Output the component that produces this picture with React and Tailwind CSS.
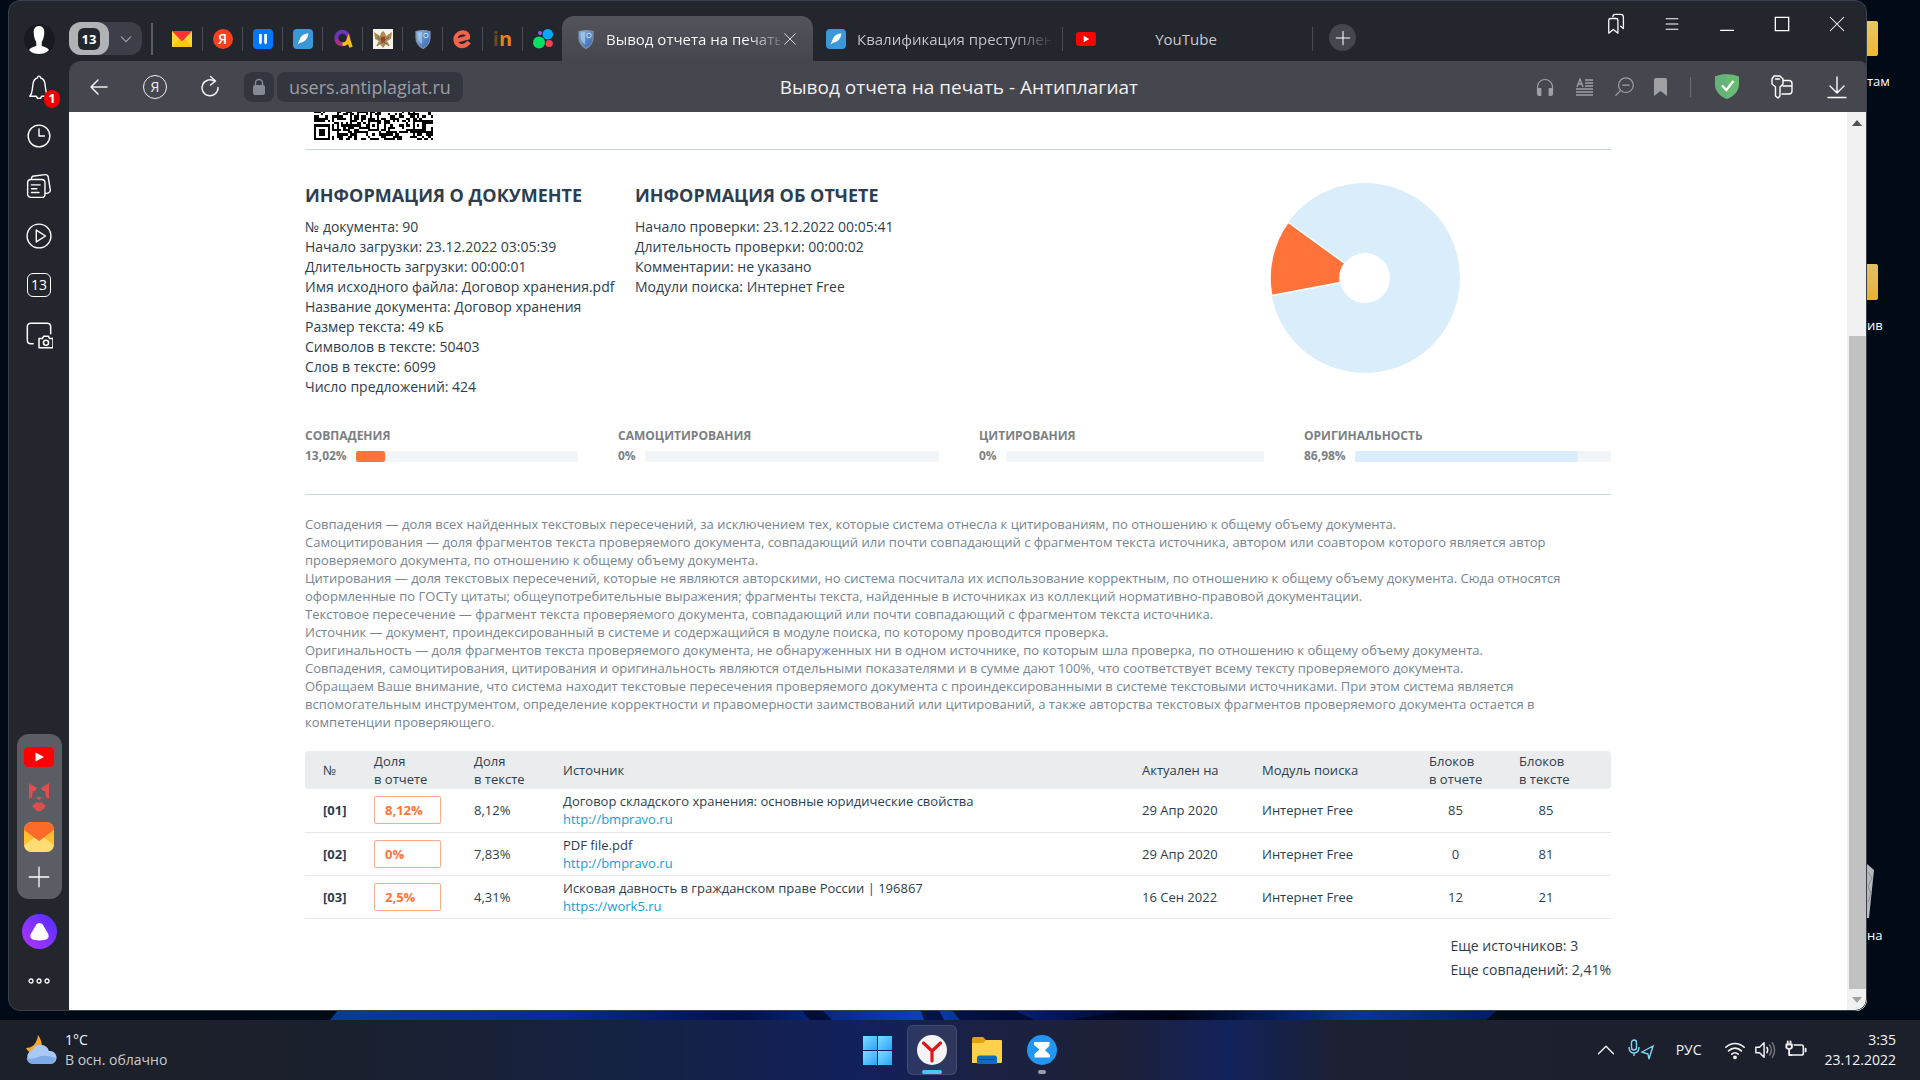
import React from "react";

const QR_SIZE = 53;

function qrCells() {
  const cells = [];
  let seed = 90417;
  const inFinder = (x, y) => x < 8 && y > 44;
  const alignAt = (x, y) => [26, 46].find((c) => Math.abs(x - c) <= 2 && Math.abs(y - 46) <= 2);
  for (let y = 40; y < QR_SIZE; y++) {
    for (let x = 0; x < QR_SIZE; x++) {
      seed = (seed * 1103515245 + 12345) % 2147483648;
      let on = (seed >> 16) % 100 < 53;
      const c = alignAt(x, y);
      if (inFinder(x, y)) {
        const d = Math.max(Math.abs(x - 3), Math.abs(y - 49));
        on = d === 3 || d <= 1;
      } else if (c !== undefined) {
        const d = Math.max(Math.abs(x - c), Math.abs(y - 46));
        on = d === 2 || d === 0;
      }
      if (on) cells.push(`M${x} ${y}h1v1h-1z`);
    }
  }
  return cells.join("");
}

const Line = ({ size = 24, children, className = "", w = 1.4 }) => (
  <svg width={size} height={size} viewBox="0 0 24 24" fill="none" stroke="currentColor" strokeWidth={w} strokeLinecap="round" strokeLinejoin="round" className={`shrink-0 ${className}`} aria-hidden="true">
    {children}
  </svg>
);

const Feather = () => (
  <svg width="20" height="20" viewBox="0 0 20 20" className="shrink-0" aria-hidden="true">
    <rect width="20" height="20" rx="4" fill="#3a98d8" />
    <path d="M15.500 4.500C11 4.500 7.500 7 6.300 11.500L4.500 15.500 7 13.800C11 13.500 14.500 10.500 15.500 4.500z" fill="#fff" />
  </svg>
);

const Shield = () => (
  <svg width="20" height="20" viewBox="0 0 20 20" className="shrink-0" aria-hidden="true">
    <defs>
      <linearGradient id="shieldBlue" x1="0" y1="0" x2="1" y2="1">
        <stop offset="0" stopColor="#8fbbe8" />
        <stop offset="1" stopColor="#2c5fae" />
      </linearGradient>
    </defs>
    <path d="M3 2.500Q10 .5 17 2.500V9c0 5-3.500 8.500-7 10.500C6.500 17.500 3 14 3 9z" fill="url(#shieldBlue)" stroke="#8391a6" strokeWidth="1.200" />
    <path d="M5 4q2-1 4-1v12.500C6.500 13.500 5 11.500 5 9z" fill="#b7d6f3" opacity=".6" />
    <circle cx="13" cy="6.500" r="2.200" fill="#4d83c7" stroke="#cfe2f6" strokeWidth="1" />
  </svg>
);

const YouTube = ({ wide }) => (
  <svg width={wide ? 30 : 20} height={wide ? 20 : 14} viewBox="0 0 30 20" preserveAspectRatio="none" className="shrink-0" aria-hidden="true">
    <rect width="30" height="20" rx="4.500" fill="#f00" />
    <path d="M11.500 5.500 20 10l-8.500 4.500z" fill="#fff" />
  </svg>
);

const pinned = [
  ["Яндекс Почта", <svg width="20" height="16" viewBox="0 0 20 16"><rect width="20" height="16" fill="#ffd533" /><path d="M0 16 7 8h6l7 8z" fill="#ffc61a" /><path d="M0 0h20L10 10.500z" fill="#f33" /></svg>],
  ["Яндекс", <span className="flex size-5 items-center justify-center rounded-full bg-[#fc3f1d] text-sm font-semibold text-white">Я</span>],
  ["Заметки", <svg width="20" height="20" viewBox="0 0 20 20"><rect width="20" height="20" rx="4" fill="#07f" /><path d="M6 5h2.800v9L7.400 15.500 6 14zM11.200 5H14v9l-1.400 1.500L11.200 14z" fill="#fff" /></svg>],
  ["Автор", <Feather />],
  ["Чат", <svg width="20" height="20" viewBox="0 0 20 20" fill="none"><circle cx="9.500" cy="9" r="6.200" stroke="#6d35b5" strokeWidth="4" /><path d="M3.500 10.500a6.200 6.200 0 0 0 6 4.700" stroke="#a83278" strokeWidth="4" /><path d="M9.500 15.200a6.200 6.200 0 0 0 6-4.500l2.500 7.500" stroke="#fbbf13" strokeWidth="3.600" /></svg>],
  ["Министерство", <svg width="20" height="20" viewBox="0 0 20 20"><rect width="20" height="20" fill="#f7f3ea" /><path d="m1 3 6 4 1-3 2-2 2 2 1 3 6-4-1 7-4 2 3 5-4-2-3 4-3-4-4 2 3-5-4-2z" fill="#a98b54" /><path d="M8 8h4v4l-2 2-2-2z" fill="#a33" /><path d="m4 17 12-9M16 17 4 8" stroke="#6b5a3a" strokeWidth=".8" /></svg>],
  ["Антиплагиат", <Shield />],
  ["Eedu", <svg width="20" height="20" viewBox="0 0 20 20" fill="none"><path d="M4 11.500 15 8.500c.5-3-2-5.500-5.500-5.200C5 3.700 2.200 7 2.500 11c.3 4 3.500 6.300 7 6 3-.2 5-1.800 6.500-4" stroke="#f2644b" strokeWidth="4.200" /></svg>],
  ["Moodle", <span className="text-xl leading-5 font-bold text-[#e8811c]"><span className="text-[#6b4630]">i</span>n</span>],
  ["Avito", <svg width="20" height="20" viewBox="0 0 20 20"><circle cx="7" cy="4" r="2" fill="#965eeb" /><circle cx="14.800" cy="5.200" r="5.200" fill="#0af" /><circle cx="6" cy="13.500" r="6" fill="#04e061" /><circle cx="16.200" cy="14.500" r="3.600" fill="#ff4053" /></svg>],
];

function TabStrip() {
  return (
    <header className="flex h-[61px] items-end pr-4">
      <div className="flex h-[45px] shrink-0 items-center">
        <button aria-label="Группа вкладок, 13" className="flex h-[33px] w-[73px] items-center rounded-xl bg-[#3d3e47] text-[#a3a4aa]">
          <span className="flex h-full w-10 items-center justify-center rounded-xl bg-[#b1b2b6]">
            <span className="flex size-[22px] items-center justify-center rounded-md bg-[#24262e] text-[13px] leading-4 font-bold text-white">13</span>
          </span>
          <Line size={14} w={2} className="ml-2.5"><path d="m4 8.500 8 8 8-8" /></Line>
        </button>
        <span className="ml-[9px] h-8 w-0.5 bg-[#5b5d66]" />
        <ul className="ml-[9px] flex">
          {pinned.map(([name, icon], i) => (
            <li key={name} className={`flex h-6 w-10 items-center justify-center ${i ? "border-l border-[#4a4c55]" : ""}`}>
              <button aria-label={name} className="flex items-center justify-center">{icon}</button>
            </li>
          ))}
        </ul>
      </div>
      <div className="flex h-[45px] w-[251px] shrink-0 items-center rounded-t-xl bg-linear-to-b from-[#53535c] to-[#46464f] pr-3 pl-3.5">
        <Shield />
        <span className="ml-2.5 w-[174px] overflow-hidden bg-linear-to-r from-white from-80% to-white/20 bg-clip-text text-[15px] leading-6 whitespace-nowrap text-transparent">Вывод отчета на печать</span>
        <button aria-label="Закрыть вкладку" className="ml-0.5 text-[#d6d6d9]"><Line size={16} w={1.5}><path d="m4 4 16 16M20 4 4 20" /></Line></button>
      </div>
      <div className="flex h-[45px] w-[249px] shrink-0 items-center pl-[13px]">
        <Feather />
        <span className="ml-[11px] w-[194px] overflow-hidden bg-linear-to-r from-[#c9cacd] from-80% to-[#c9cacd]/10 bg-clip-text text-[15px] leading-6 whitespace-nowrap text-transparent">Квалификация преступлен</span>
      </div>
      <div className="flex h-[45px] w-[251px] shrink-0 items-center">
        <span className="h-6 w-px bg-[#4a4c55]" />
        <span className="ml-[13px]"><YouTube /></span>
        <span className="flex-1 pr-9 text-center text-[15px] leading-6 text-[#c9cacd]">YouTube</span>
        <span className="h-6 w-px bg-[#4a4c55]" />
      </div>
      <button aria-label="Новая вкладка" className="mb-2.5 ml-4 flex size-[27px] shrink-0 items-center justify-center rounded-full bg-[#46464f] text-white"><Line size={18}><path d="M12 3v18M3 12h18" /></Line></button>
      <div className="mb-[26px] ml-auto flex shrink-0 items-center text-white">
        <button aria-label="Коллекции" className="flex w-[55px] justify-center"><Line size={22}><path d="M3 8q0-2 2-2h6q2 0 2 2v14l-5-4-5 4zM7.500 4q0-2.500 2.500-2.500h6q3 0 3 3V17l-3-2.500" /></Line></button>
        <button aria-label="Меню" className="flex w-[55px] justify-center"><Line size={14} w={2}><path d="M2 3h20M2 12h20M2 21h20" /></Line></button>
        <button aria-label="Свернуть" className="flex w-[55px] justify-center"><Line size={14} w={2}><path d="M1 23h22" /></Line></button>
        <button aria-label="Развернуть" className="flex w-[55px] justify-center"><Line size={16} w={2}><path d="M2 2h20v20H2z" strokeLinejoin="miter" /></Line></button>
        <button aria-label="Закрыть" className="-mr-[13px] flex w-[55px] justify-center"><Line size={18}><path d="m3 3 18 18M21 3 3 21" /></Line></button>
      </div>
    </header>
  );
}

function Toolbar() {
  return (
    <nav className="flex h-[51px] items-center rounded-tl-xl rounded-tr-lg bg-[#46464f] pl-3.5 text-[#f0f0f1]">
      <button aria-label="Назад" className="mr-8 ml-1"><Line w={1.5}><path d="M20 12H4M11 5l-7 7 7 7" /></Line></button>
      <button aria-label="Яндекс" className="mr-[31px] flex size-6 items-center justify-center rounded-full border border-[#f0f0f1] text-sm leading-5">Я</button>
      <button aria-label="Обновить" className="mr-[22px]"><Line w={1.5}><path d="M17 6.500A8 8 0 1 0 20 12.500M12.500 1.500l5 4.500-5 4" /></Line></button>
      <button aria-label="Защищённое соединение" className="mr-[3px] flex h-[30px] w-[30px] items-center justify-center rounded-lg bg-[#34363f]">
        <svg width="14" height="18" viewBox="0 0 14 18" aria-hidden="true"><rect x="1" y="7" width="12" height="10" rx="2" fill="#858a93" /><path d="M3.500 8V5a3.500 3.500 0 0 1 7 0v3" fill="none" stroke="#858a93" strokeWidth="1.400" /></svg>
      </button>
      <button className="h-[30px] rounded-lg bg-[#34363f] px-3 text-[18px] leading-6 text-[#9c9da3]">users.antiplagiat.ru</button>
      <h1 className="flex-1 pr-[68px] text-center text-[19px] leading-6">Вывод отчета на печать - Антиплагиат</h1>
      <div className="flex w-[344px] shrink-0 items-center text-[#a0a0a4]">
        <button aria-label="Озвучить" className="ml-3"><Line size={20}><path d="M3 15v-3a9 9 0 0 1 18 0v3" /><path d="M3 14h4v8H5q-2 0-2-2zM21 14h-4v8h2q2 0 2-2z" fill="currentColor" /></Line></button>
        <button aria-label="Режим чтения" className="ml-[21px]"><svg width="18" height="18" viewBox="0 0 18 18" fill="none" stroke="currentColor" strokeWidth="1.300" aria-hidden="true"><path d="M1 9 4 1l3 8M2 6h4M9 2h8M9 5h8M9 8h8M0 11h17M0 14h17M0 17h17" /></svg></button>
        <button aria-label="Масштаб" className="ml-5"><Line size={22} w={1.3}><circle cx="13" cy="10" r="8" /><path d="M9.500 10h7M7 16l-5 5" /></Line></button>
        <button aria-label="Закладка" className="ml-[18px]"><svg width="13" height="18" viewBox="0 0 13 18" aria-hidden="true"><path d="M0 2q0-2 2-2h9q2 0 2 2v16l-6.500-5L0 18z" fill="currentColor" /></svg></button>
        <span className="ml-[23px] h-5 w-px bg-[#6b6b73]" />
        <button aria-label="Защита" className="ml-6"><svg width="24" height="25" viewBox="0 0 24 25" aria-hidden="true"><path d="M0 2.500Q12-2 24 2.500V10c0 8-6 12.500-12 15C6 22.500 0 18 0 10z" fill="#68bc71" /><path d="M0 2.500Q6 .2 12 .2V25C6 22.500 0 18 0 10z" fill="#67b279" /><path d="m7 11.500 4.300 4.500L18.500 7" fill="none" stroke="#fff" strokeWidth="2.200" /></svg></button>
        <button aria-label="Пароли" className="ml-[31px] text-white"><Line w={1.4}><path d="M4 1h6l3 3v5l-3 3v9l-2 2-2.500-2v-9L2 9V4zM5.500 4h4M13 5.500h6q3 0 3 3V16q0 3-3 3h-7M13 11h9" /></Line></button>
        <button aria-label="Загрузки" className="ml-[31px] text-white"><Line><path d="M12 2v16M5 11l7 7 7-7M3 22.500h18" /></Line></button>
      </div>
    </nav>
  );
}

function Sidebar() {
  return (
    <aside className="flex w-[61px] shrink-0 flex-col items-center pt-6 pl-px text-white">
      <button aria-label="Профиль" className="flex size-[31px] items-center justify-center overflow-hidden rounded-full bg-[#181a20]">
        <svg width="20" height="28" viewBox="0 0 22 28" preserveAspectRatio="none" aria-hidden="true"><path d="M11 0c4.500 0 6 3 5.800 7-.2 4-1.300 7-2.800 9v4c4 1 7 2 8 4-3 3-7 4-11 4S3 27 0 24c1-2 4-3 8-4v-4c-1.500-2-2.600-5-2.800-9C5 3 6.500 0 11 0z" fill="#fff" /></svg>
      </button>
      <button aria-label="Уведомления, 1" className="relative mt-[19px]">
        <Line size={26} w={1.3}><path d="M3.500 20.500c1.500-1.500 2-3 2.300-6L6.500 9c.4-3 2-4.800 4-5.300Q10.700 2 12 2t1.500 1.700c2 .5 3.600 2.300 4 5.300l.7 5.500c.3 3 .8 4.500 2.300 6h-6q-.5 2-2.500 2t-2.500-2z" /></Line>
        <span className="absolute top-4 left-[18px] flex h-[18px] w-4 items-center justify-center rounded-full bg-[#f20000] text-[13px] font-bold">1</span>
      </button>
      <button aria-label="История" className="mt-[23px]"><Line size={26} w={1.3}><circle cx="12" cy="12" r="10" /><path d="M12 5.500V12h5" /></Line></button>
      <button aria-label="Лента" className="mt-6"><Line size={26} w={1.3}><rect x="1.500" y="6" width="16" height="16.500" rx="3" /><path d="M5 5V4.500L6 3l11.500-1.500q2.500-.2 3 2L22.500 16q0 2-2 2.500l-3 .5M5 11h8M5 14.500h5M5 18h7" /></Line></button>
      <button aria-label="Видео" className="mt-6"><Line size={26} w={1.3}><circle cx="12" cy="12" r="11" /><path d="M9.500 6.500 18 12l-8.500 5.500z" /></Line></button>
      <button aria-label="Календарь, 13" className="mt-6 flex size-6 items-center justify-center rounded-md border border-white text-sm leading-5">13</button>
      <button aria-label="Скриншот" className="mt-6"><Line size={28} w={1.3}><path d="M7 19.500H5q-3 0-3-3V5q0-3 3-3h14q3 0 3 3v6M12 15h3l1-2h4l1 2h3v8H12z" /><circle cx="18" cy="18.700" r="2.200" /></Line></button>
      <div className="mt-auto flex h-[165px] w-[45px] flex-col items-center rounded-xl bg-[#5b5d65] pt-[13px]">
        <button aria-label="YouTube"><YouTube wide /></button>
        <button aria-label="Игры" className="mt-4">
          <svg width="20" height="28" viewBox="0 0 20 28" fill="#f04a4a" aria-hidden="true"><path d="M0 0 8 5 6 8 4 8 3 14 0 16zM20 0l-8 5 2 3h2l1 6 3 2zM7 14h6l-3 3zM3 23l5-4 2 1 2-1 5 4-5 5H8z" opacity=".9" /></svg>
        </button>
        <button aria-label="Почта" className="mt-[11px]">
          <svg width="30" height="30" viewBox="0 0 30 30" aria-hidden="true"><rect width="30" height="30" rx="8" fill="#ffbf2e" /><path d="M0 23 11 15h8l11 8v0q-1 7-8 7H8q-7 0-8-7z" fill="#ffdc74" /><path d="M0 8q1-8 8-8h14q7 0 8 8L15 19z" fill="#fd6a2a" /></svg>
        </button>
        <button aria-label="Добавить" className="mt-3"><Line size={26} w={1.2}><path d="M12 3v18M3 12h18" /></Line></button>
      </div>
      <button aria-label="Алиса" className="mt-[15px] flex size-[35px] items-center justify-center rounded-full bg-linear-to-tr from-[#b52bff] to-[#4a2bff]">
        <svg width="19" height="18" viewBox="0 0 19 18" aria-hidden="true"><path d="M9.500 0c2 0 3 1.200 4.200 3.200l4 6.800c2 3.500 1.500 7.500-8.200 7.500S-.7 13.500 1.300 10l4-6.800C6.500 1.200 7.500 0 9.500 0z" fill="#fff" /></svg>
      </button>
      <button aria-label="Ещё" className="mt-7 mb-[26px]"><svg width="22" height="8" viewBox="0 0 22 8" fill="none" stroke="#fff" strokeWidth="1.300" aria-hidden="true"><circle cx="3" cy="4" r="2" /><circle cx="11" cy="4" r="2" /><circle cx="19" cy="4" r="2" /></svg></button>
    </aside>
  );
}

const docInfo = ["№ документа: 90", "Начало загрузки: 23.12.2022 03:05:39", "Длительность загрузки: 00:00:01", "Имя исходного файла: Договор хранения.pdf", "Название документа: Договор хранения", "Размер текста: 49 кБ", "Символов в тексте: 50403", "Слов в тексте: 6099", "Число предложений: 424"];
const reportInfo = ["Начало проверки: 23.12.2022 00:05:41", "Длительность проверки: 00:00:02", "Комментарии: не указано", "Модули поиска: Интернет Free"];

const stats = [
  { name: "СОВПАДЕНИЯ", value: "13,02%", pct: 13.02, fill: "bg-[#ff733b]" },
  { name: "САМОЦИТИРОВАНИЯ", value: "0%", pct: 0, fill: "" },
  { name: "ЦИТИРОВАНИЯ", value: "0%", pct: 0, fill: "" },
  { name: "ОРИГИНАЛЬНОСТЬ", value: "86,98%", pct: 86.98, fill: "bg-[#daedfb]" },
];

const notes = [
  "Совпадения — доля всех найденных текстовых пересечений, за исключением тех, которые система отнесла к цитированиям, по отношению к общему объему документа.",
  "Самоцитирования — доля фрагментов текста проверяемого документа, совпадающий или почти совпадающий с фрагментом текста источника, автором или соавтором которого является автор проверяемого документа, по отношению к общему объему документа.",
  "Цитирования — доля текстовых пересечений, которые не являются авторскими, но система посчитала их использование корректным, по отношению к общему объему документа. Сюда относятся оформленные по ГОСТу цитаты; общеупотребительные выражения; фрагменты текста, найденные в источниках из коллекций нормативно-правовой документации.",
  "Текстовое пересечение — фрагмент текста проверяемого документа, совпадающий или почти совпадающий с фрагментом текста источника.",
  "Источник — документ, проиндексированный в системе и содержащийся в модуле поиска, по которому проводится проверка.",
  "Оригинальность — доля фрагментов текста проверяемого документа, не обнаруженных ни в одном источнике, по которым шла проверка, по отношению к общему объему документа.",
  "Совпадения, самоцитирования, цитирования и оригинальность являются отдельными показателями и в сумме дают 100%, что соответствует всему тексту проверяемого документа.",
  "Обращаем Ваше внимание, что система находит текстовые пересечения проверяемого документа с проиндексированными в системе текстовыми источниками. При этом система является вспомогательным инструментом, определение корректности и правомерности заимствований или цитирований, а также авторства текстовых фрагментов проверяемого документа остается в компетенции проверяющего.",
];

const rows = [
  ["[01]", "8,12%", "8,12%", "Договор складского хранения: основные юридические свойства", "http://bmpravo.ru", "29 Апр 2020", "85", "85"],
  ["[02]", "0%", "7,83%", "PDF file.pdf", "http://bmpravo.ru", "29 Апр 2020", "0", "81"],
  ["[03]", "2,5%", "4,31%", "Исковая давность в гражданском праве России | 196867", "https://work5.ru", "16 Сен 2022", "12", "21"],
];

function Report() {
  return (
    <main className="mx-auto w-full max-w-[1306px] text-[#2c3e50]">
      <div className="h-[38px] border-b border-[#ccd6de] pl-[9px]">
        <svg width="119" height="28" viewBox="0 40.5 53 12.5" shapeRendering="crispEdges" role="img" aria-label="QR-код"><path d={qrCells()} fill="#000" /></svg>
      </div>
      <section className="flex pt-8">
        <div className="w-[330px] shrink-0">
          <h2 className="text-[18px] leading-[26px] font-bold">ИНФОРМАЦИЯ О ДОКУМЕНТЕ</h2>
          <div className="mt-[9px] text-sm leading-5 whitespace-nowrap">{docInfo.map((t) => <p key={t}>{t}</p>)}</div>
        </div>
        <div>
          <h2 className="text-[18px] leading-[26px] font-bold">ИНФОРМАЦИЯ ОБ ОТЧЕТЕ</h2>
          <div className="mt-[9px] text-sm leading-5">{reportInfo.map((t) => <p key={t}>{t}</p>)}</div>
        </div>
        <svg width="190" height="190" viewBox="-95 -95 190 190" className="mt-px mr-[151px] ml-auto" role="img" aria-label="Оригинальность 86,98%, совпадения 13,02%">
          <circle r="60" fill="none" stroke="#daedfb" strokeWidth="70" />
          <path d="M-93.300 17.500A95 95 0 0 1-76.900-55.800L-20.200-14.700A25 25 0 0 0-24.600 4.600z" fill="#ff733b" stroke="#fff" strokeWidth="1.500" />
        </svg>
      </section>
      <section className="mt-[25px] grid grid-cols-[273fr_321fr_285fr_307fr] gap-x-10 pt-1 text-xs leading-5 font-bold text-[#7b8084]">
        {stats.map((s) => (
          <div key={s.name}>
            <h3>{s.name}</h3>
            <div className="flex items-center gap-[9px]">
              <span>{s.value}</span>
              <div className="h-[11px] flex-1 rounded-xs bg-[#f1f5f8]"><div className={`h-full rounded-xs ${s.fill}`} style={{ width: `${s.pct}%` }} /></div>
            </div>
          </div>
        ))}
      </section>
      <section className="mt-7 border-t border-[#ccd6de] pt-5 text-[13px] leading-[18px] text-[#768590]">
        <div className="max-w-[1270px]">{notes.map((n) => <p key={n}>{n}</p>)}</div>
      </section>
      <table className="mt-5 w-full table-fixed text-left text-[13px] leading-[18px]">
        <colgroup>
          <col className="w-[69px]" /><col className="w-[100px]" /><col className="w-[89px]" /><col /><col className="w-[120px]" /><col className="w-[147px]" /><col className="w-[91px]" /><col className="w-[111px]" />
        </colgroup>
        <thead>
          <tr className="h-[38px] bg-[#eaecee] *:p-0 *:font-normal">
            <th className="rounded-l-sm"><span className="pl-[18px]">№</span></th>
            <th>Доля<br />в отчете</th>
            <th>Доля<br />в тексте</th>
            <th>Источник</th>
            <th>Актуален на</th>
            <th>Модуль поиска</th>
            <th><span className="ml-5 block">Блоков<br />в отчете</span></th>
            <th className="rounded-r-sm"><span className="ml-[19px] block">Блоков<br />в тексте</span></th>
          </tr>
        </thead>
        <tbody>
          {rows.map(([n, share, inText, title, url, date, b1, b2]) => (
            <tr key={n} className="h-[43px] border-b border-[#e6e8ea] *:p-0">
              <td className="font-bold"><span className="pl-[18px]">{n}</span></td>
              <td><span className="flex h-7 w-[67px] items-center rounded-xs border border-[#ffab89] pl-2.5 font-bold text-[#ff733b]">{share}</span></td>
              <td>{inText}</td>
              <td><div>{title}</div><a href={url} className="block text-[#1a9cd8]">{url}</a></td>
              <td>{date}</td>
              <td>Интернет Free</td>
              <td className="text-center"><span className="block pl-0.5">{b1}</span></td>
              <td className="text-center"><span className="block w-[92px]">{b2}</span></td>
            </tr>
          ))}
        </tbody>
      </table>
      <div className="mt-[15px] ml-auto w-fit text-sm leading-6">
        <p>Еще источников: 3</p>
        <p>Еще совпадений: 2,41%</p>
      </div>
    </main>
  );
}

function Taskbar() {
  return (
    <footer className="grid h-[60px] shrink-0 grid-cols-[1fr_auto_1fr] items-center bg-[linear-gradient(90deg,#1c2029_0%,#1a202d_18%,#152247_35%,#12205c_45%,#1a2144_51%,#1d2036_58%,#12225c_64%,#1c2030_70%,#1c202b_100%)] text-[#f3f3f5]">
      <button className="ml-[26px] flex items-center gap-2 text-left text-sm leading-5">
        <svg width="31" height="30" viewBox="0 0 31 30" aria-hidden="true"><path d="M12 0c-1 9-6 13-12 13 2 5 8 6 12 4 5-3 5-10 0-17z" fill="#f5a62c" /><path d="M7 29a7 7 0 0 1-1-13.500A9 9 0 0 1 23 16a6.500 6.500 0 0 1 2 13z" fill="#a9c8f5" /><path d="M7 29a7 7 0 0 1-6.500-6q6 2 12-1t17 1A6.500 6.500 0 0 1 25 29z" fill="#7faaea" /></svg>
        <span>1°C<br /><span className="text-[#c8cad0]">В осн. облачно</span></span>
      </button>
      <div className="flex items-center gap-[15px]">
        <button aria-label="Пуск" className="grid grid-cols-2 gap-px">
          {[0, 1, 2, 3].map((i) => <span key={i} className="size-3.5 bg-linear-to-br from-[#7ddcff] to-[#1fa5fb]" />)}
        </button>
        <button aria-label="Яндекс Браузер" className="relative flex size-[50px] items-center justify-center rounded-md border border-white/10 bg-white/10">
          <svg width="30" height="30" viewBox="0 0 30 30" aria-hidden="true"><circle cx="15" cy="15" r="15" fill="#f4f4f4" /><path d="m6.500 8 8.500 8 8.500-8M15 16v10" fill="none" stroke="#e0161b" strokeWidth="3.200" strokeLinecap="round" /></svg>
          <span className="absolute bottom-0 left-3.5 h-1 w-5 rounded-full bg-[#4cc2ff]" />
        </button>
        <button aria-label="Проводник">
          <svg width="30" height="27" viewBox="0 0 30 27" aria-hidden="true"><path d="M0 2q0-2 2-2h9l3 3v4H0z" fill="#e0a10c" /><path d="M0 6h11l3-3h15q1 0 1 1v21q0 1-1 1H0z" fill="#ffd04a" /><path d="M5 27v-6q0-2.500 2.500-2.500h15Q25 18.500 25 21v6z" fill="#0a6cc4" /><path d="M8 22.500h14" stroke="#084a8a" /></svg>
        </button>
        <button aria-label="Z-приложение" className="relative ml-2.5">
          <svg width="30" height="30" viewBox="0 0 30 30" aria-hidden="true"><circle cx="15" cy="15" r="15" fill="#2196f3" /><path d="M7 7h15.500v4L18 15l5 5v2.500H7.500V19l5-4.500L7 10z" fill="#fff" /></svg>
          <span className="absolute top-[35px] left-[11px] h-1 w-2 rounded-full bg-[#9b9ca6]" />
        </button>
      </div>
      <div className="mr-6 flex items-center justify-end text-sm leading-5">
        <button aria-label="Скрытые значки"><Line size={18} w={1.8}><path d="m2 17 10-10 10 10" /></Line></button>
        <button aria-label="Микрофон и геопозиция" className="ml-[13px] text-[#7fd6ef]"><svg width="26" height="22" viewBox="0 0 26 22" fill="none" stroke="currentColor" strokeWidth="1.400" aria-hidden="true"><rect x="3.500" y="1" width="5" height="10" rx="2.500" /><path d="M1 8c0 4 2 6 5 6s5-2 5-6M6 14v3M25 7l-11 6 6 2 1 5z" /></svg></button>
        <button className="ml-[21px] w-7">РУС</button>
        <button aria-label="Wi-Fi" className="ml-[21px]"><Line size={22} w={1.8}><path d="M2 9c6-5.500 14-5.500 20 0M5 13c4-4 10-4 14 0M8.500 16.500c2-2 5-2 7 0" /><circle cx="12" cy="20" r="1.200" fill="currentColor" /></Line></button>
        <button aria-label="Громкость" className="ml-2"><Line size={22} w={1.6}><path d="M2 9v6h4l5 5V4L6 9zM14 9q2 3 0 6" /><path d="M17 6.500q4 5.500 0 11M20 4q5 8 0 16" opacity=".4" /></Line></button>
        <button aria-label="Батарея" className="ml-[9px]"><Line size={22} w={1.7}><path d="M10 6.500h8q2 0 2 2v7q0 2-2 2H7" /><path d="M1.500 6h6v3.500q-3 3-6 0zM3 2.500V6M6 2.500V6M4.500 11v6.500H7M22.500 10.500v3" strokeWidth="2" /></Line></button>
        <time dateTime="2022-12-23T03:35" className="ml-[18px] text-right">3:35<br />23.12.2022</time>
      </div>
    </footer>
  );
}

function Desktop() {
  return (
    <>
      <svg className="absolute bottom-0 left-[330px] h-3 w-[1170px]" viewBox="0 0 1170 12" preserveAspectRatio="none" aria-hidden="true">
        <defs>
          <linearGradient id="bloom" x1="0" x2="1">
            <stop offset="0" stopColor="#0a3a9c" /><stop offset=".2" stopColor="#062a9a" /><stop offset=".35" stopColor="#03104a" /><stop offset=".5" stopColor="#0a3fc0" /><stop offset=".62" stopColor="#05145c" /><stop offset=".72" stopColor="#01030f" /><stop offset=".88" stopColor="#08349c" /><stop offset="1" stopColor="#031a66" />
          </linearGradient>
        </defs>
        <path d="M10 0H1170l-14 12H0z" fill="url(#bloom)" />
        <path d="M470 0h20l12 12h-22zM590 0h18l6 12h-20zM620 0h60l24 12h-74zM810 0h70l-60 12h-80z" fill="#01041c" opacity=".7" />
      </svg>
      <div className="absolute inset-y-0 right-0 w-[53px] text-[13px] leading-5 text-white">
        <span className="absolute top-[21px] left-0 h-[35px] w-[11px] rounded-r-xs bg-linear-to-b from-[#e8c860] to-[#eeb92c]" />
        <span className="absolute top-[71px] left-0">там</span>
        <span className="absolute top-[264px] left-0 h-9 w-[11px] rounded-r-xs bg-linear-to-b from-[#e0c067] to-[#eab32c]" />
        <span className="absolute top-[315px] left-0">ив</span>
        <svg className="absolute top-[864px] left-0" width="8" height="54" viewBox="0 0 8 54" aria-hidden="true"><path d="M0 0l7 6-5 48H0z" fill="#b5b8ba" /><path d="M1 8l4 6-4 8 3 8-3 8" stroke="#8b8f92" fill="none" /></svg>
        <span className="absolute top-[925px] left-0">на</span>
      </div>
    </>
  );
}

export default function App() {
  return (
    <div className="flex h-screen flex-col overflow-hidden bg-[#010a17] font-['Open_Sans','Noto_Sans',sans-serif]">
      <div className="relative flex min-h-0 flex-1 pr-[53px] pb-[9px] pl-2">
        <Desktop />
        <div className="relative flex min-w-0 flex-1 overflow-hidden rounded-xl bg-[#24262e]">
          <Sidebar />
          <div className="flex min-w-0 flex-1 flex-col">
            <TabStrip />
            <Toolbar />
            <div className="flex min-h-0 flex-1 bg-white">
              <div className="min-w-0 flex-1 overflow-hidden"><Report /></div>
              <div className="flex w-5 flex-col items-center bg-[#f1f1f1]">
                <svg width="10" height="6" viewBox="0 0 10 6" className="mt-2" aria-hidden="true"><path d="M0 6 5 0l5 6z" fill="#505050" /></svg>
                <div className="mt-[210px] w-[17px] flex-1 bg-[#c1c1c1]" />
                <svg width="10" height="6" viewBox="0 0 10 6" className="my-2" aria-hidden="true"><path d="m0 0 5 6 5-6z" fill="#a3a3a3" /></svg>
              </div>
            </div>
          </div>
          <div className="pointer-events-none absolute inset-0 rounded-xl border border-[#3a414d]" />
        </div>
      </div>
      <Taskbar />
    </div>
  );
}
